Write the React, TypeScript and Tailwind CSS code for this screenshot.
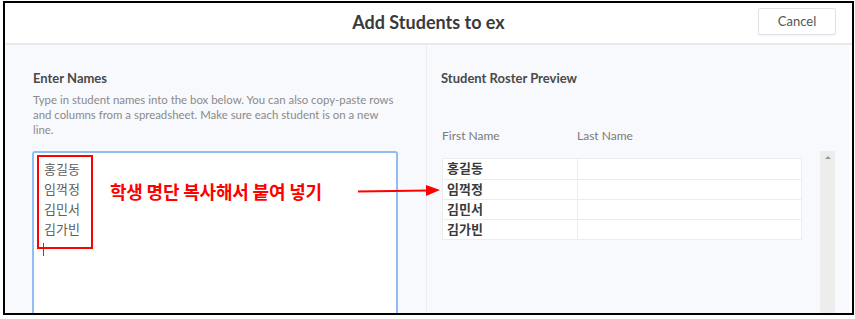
// Add Students dialog with red paste annotation
const names = ["홍길동", "임꺽정", "김민서", "김가빈"];

const latoKr = "font-['Lato','Noto_Sans_CJK_KR',sans-serif]";

export default function App() {
  return (
    <div className={`relative w-[855px] h-[319px] bg-white ${latoKr}`}>
      <div className="ml-[3px] mt-[1px] w-[851px] h-[314px] border-2 border-black overflow-hidden flex flex-col">
        {/* ── Header ─────────────────────────────────────────── */}
        <div className="h-[42px] shrink-0 bg-white border-b-2 border-[#e8e9ec] grid grid-cols-[1fr_auto_1fr]">
          <div />
          <h1 className="self-center text-[18px] font-bold text-[#3a3a3a] leading-none pb-[2px]">
            Add Students to ex
          </h1>
          <div className="flex justify-end">
            <button className="mt-[5px] mr-[16px] w-[78px] h-[27px] rounded-[2px] border border-[#e1e1e4] bg-white text-[13px] text-[#555] shadow-[0_1px_1px_rgba(0,0,0,0.04)]">
              Cancel
            </button>
          </div>
        </div>

        {/* ── Body ───────────────────────────────────────────── */}
        <div className="flex-1 flex bg-white">
          {/* Left: enter names */}
          <div className="w-[422px] bg-[#f8f9fc] border-r border-[#eceef2] pl-[28px] pt-[25px]">
            <p className="text-[13px] font-bold text-[#4a4a4a] leading-[16px]">Enter Names</p>
            <p className="mt-[6px] whitespace-nowrap text-[11.4px] leading-[15px] text-[#8a8a8a]">
              Type in student names into the box below. You can also copy-paste rows
              <br />
              and columns from a spreadsheet. Make sure each student is on a new
              <br />
              line.
            </p>
            <div className="mt-[14px] -ml-px w-[366px] h-[200px] bg-white border-2 border-[#92bdf3] rounded-t-[3px] pl-[10px] pt-[6px] text-[13px] leading-[20px] text-[#5e5e5e]">
              {names.map((n) => (
                <div key={n}>{n}</div>
              ))}
              <div className="mt-[4px] ml-[-1px] w-px h-[13px] bg-[#555]" />
            </div>
          </div>

          {/* Right: roster preview */}
          <div className="flex-1 bg-[#f8f9fc] pl-[14px] pt-[25px]">
            <p className="text-[13px] font-bold text-[#4a4a4a] leading-[16px]">Student Roster Preview</p>
            <div className="mt-[42px] ml-px flex text-[12px] leading-[16px] text-[#7a7a7a]">
              <span className="w-[135px]">First Name</span>
              <span>Last Name</span>
            </div>
            <div className="mt-[7px] flex h-full">
              <div className="mt-[7px] ml-px w-[360px] self-start border border-[#ececef] bg-white">
                {names.map((n, i) => (
                  <div
                    key={n}
                    className={`flex h-[20px] ${i > 0 ? "border-t border-[#ececef]" : ""}`}
                  >
                    <div className="w-[135px] border-r border-[#ececef] pl-[4px] text-[13px] leading-[19px] font-semibold text-[#3a3a3a]">
                      {n}
                    </div>
                    <div className="flex-1" />
                  </div>
                ))}
              </div>
              <div className="ml-[18px] w-[15px] h-full bg-[#ededed] flex justify-center pt-[5px]">
                <div className="w-0 h-0 border-x-[3px] border-x-transparent border-b-[3px] border-b-[#999]" />
              </div>
            </div>
          </div>
          <div className="w-[3px] bg-white" />
        </div>
      </div>

      {/* ── Red annotation overlay ─────────────────────────── */}
      <div className="absolute left-[37px] top-[154px] w-[56px] h-[94px] border-2 border-[#ff0000]" />
      <div className="absolute left-[110px] top-[179px] text-[18px] leading-[22px] font-bold text-[#ff0000] font-['Noto_Sans_CJK_KR',sans-serif] tracking-[-0.2px]">
        학생 명단 복사해서 붙여 넣기
      </div>
      <svg className="absolute left-[356px] top-[182px]" width="86" height="16" viewBox="0 0 86 16">
        <line x1="2" y1="8.5" x2="72" y2="7.5" stroke="#ff0000" strokeWidth="2" />
        <polygon points="70,2 84,7 70,13" fill="#ff0000" />
      </svg>
    </div>
  );
}
